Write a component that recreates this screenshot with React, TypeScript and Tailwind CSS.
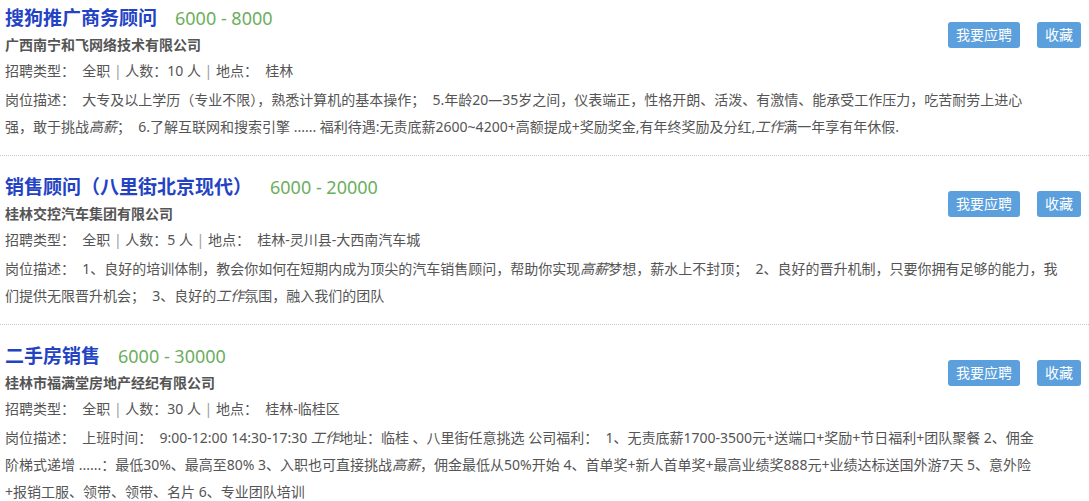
import React from "react";

type Job = {
  title: string;
  salary: string;
  company: string;
  type: string;
  count: string;
  place: string;
  desc: React.ReactNode;
};

const jobs: Job[] = [
  {
    title: "搜狗推广商务顾问",
    salary: "6000 - 8000",
    company: "广西南宁和飞网络技术有限公司",
    type: "全职",
    count: "10",
    place: "桂林",
    desc: (
      <>
        岗位描述：&nbsp; 大专及以上学历（专业不限），熟悉计算机的基本操作；&nbsp; 5.年龄20—35岁之间，仪表端正，性格开朗、活泼、有激情、能承受工作压力，吃苦耐劳上进心
        <br />
        强，敢于挑战<em>高薪</em>；&nbsp; 6.了解互联网和搜索引擎 ...... 福利待遇:无责底薪2600~4200+高额提成+奖励奖金,有年终奖励及分红,<em>工作</em>满一年享有年休假.
      </>
    ),
  },
  {
    title: "销售顾问（八里街北京现代）",
    salary: "6000 - 20000",
    company: "桂林交控汽车集团有限公司",
    type: "全职",
    count: "5",
    place: "桂林-灵川县-大西南汽车城",
    desc: (
      <>
        岗位描述：&nbsp; 1、良好的培训体制，教会你如何在短期内成为顶尖的汽车销售顾问，帮助你实现<em>高薪</em>梦想，薪水上不封顶；&nbsp; 2、良好的晋升机制，只要你拥有足够的能力，我
        <br />
        们提供无限晋升机会；&nbsp; 3、良好的<em>工作</em>氛围，融入我们的团队
      </>
    ),
  },
  {
    title: "二手房销售",
    salary: "6000 - 30000",
    company: "桂林市福满堂房地产经纪有限公司",
    type: "全职",
    count: "30",
    place: "桂林-临桂区",
    desc: (
      <>
        岗位描述：&nbsp; 上班时间：&nbsp; 9:00-12:00 14:30-17:30 <em>工作</em>地址：临桂 、八里街任意挑选 公司福利：&nbsp; 1、无责底薪1700-3500元+送端口+奖励+节日福利+团队聚餐 2、佣金
        <br />
        阶梯式递增 ......：最低30%、最高至80% 3、入职也可直接挑战<em>高薪</em>，佣金最低从50%开始 4、首单奖+新人首单奖+最高业绩奖888元+业绩达标送国外游7天 5、意外险
        <br />
        +报销工服、领带、领带、名片 6、专业团队培训
      </>
    ),
  },
];

function JobItem({ job, first }: { job: Job; first: boolean }) {
  return (
    <li
      className={`px-[5px] pb-[15px] border-b border-dotted border-[#c8c8c8] ${
        first ? "pt-[5px]" : "pt-[18px]"
      }`}
    >
      <div className="float-right mt-[17px] mr-[3px] flex gap-[17px]">
        <button className="h-[26px] px-2 rounded-[3px] bg-[#5b9fdc] text-white text-[14px] leading-[26px]">
          我要应聘
        </button>
        <button className="h-[26px] px-2 rounded-[3px] bg-[#5b9fdc] text-white text-[14px] leading-[26px]">
          收藏
        </button>
      </div>
      <div className="flex items-center h-[26px]">
        <h3 className="text-[19px] font-bold text-[#2443c4] leading-[26px]">{job.title}</h3>
        <span className="ml-[18px] text-[18px] text-[#6cae5e] leading-[26px]">{job.salary}</span>
      </div>
      <p className="mt-px text-[14px] font-bold text-[#555] leading-[26px]">{job.company}</p>
      <p className="text-[14px] text-[#555] leading-[26px]">
        招聘类型：&nbsp; 全职 <span className="text-[#999]">|</span> 人数：{job.count} 人{" "}
        <span className="text-[#999]">|</span> 地点：&nbsp; {job.place}
      </p>
      <p className="mt-[2px] text-[14px] text-[#555] leading-[27px]">{job.desc}</p>
    </li>
  );
}

export default function App() {
  return (
    <div
      className="w-[1089px] h-[501px] overflow-hidden bg-white"
      style={{ fontFamily: '"Noto Sans", "Noto Sans CJK SC", sans-serif' }}
    >
      <ul>
        {jobs.map((job, i) => (
          <JobItem key={i} job={job} first={i === 0} />
        ))}
      </ul>
    </div>
  );
}
